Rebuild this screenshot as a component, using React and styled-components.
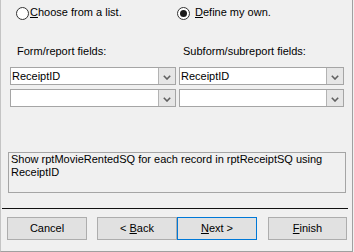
import styled, { createGlobalStyle } from 'styled-components';

const GlobalStyle = createGlobalStyle`
    body {
        margin: 0;
        background: #f0f0f0;
        font-family: "Liberation Sans", Arial, sans-serif;
        font-size: 11px;
        color: #000;
    }
`;

function Chevron() {
    return (
        <svg width="8" height="5" viewBox="0 0 8 5">
            <path d="M0.8 0.8 L4 4 L7.2 0.8" fill="none" stroke="#606060" strokeWidth="1.6" />
        </svg>
    );
}

function Combo({value}) {
    return (
        <ComboBox>
            <ComboText>{value}</ComboText>
            <DropButton><Chevron /></DropButton>
        </ComboBox>
    );
}

function App() {
    return (
        <Frame>
            <GlobalStyle />
            <RadioRow>
                <RadioItem $gap={1}>
                    <RadioCircle />
                    <span><u>C</u>hoose from a list.</span>
                </RadioItem>
                <RadioItem $gap={5}>
                    <RadioCircle $checked />
                    <span><u>D</u>efine my own.</span>
                </RadioItem>
            </RadioRow>

            <FieldGrid>
                <FieldLabel $indent={7}>Form/report fields:</FieldLabel>
                <FieldLabel $indent={4}>Subform/subreport fields:</FieldLabel>
                <Combo value="ReceiptID" />
                <Combo value="ReceiptID" />
                <Combo value="" />
                <Combo value="" />
            </FieldGrid>

            <Summary>
                Show rptMovieRentedSQ for each record in rptReceiptSQ using ReceiptID
            </Summary>

            <Separator />

            <ButtonBar>
                <Button $before={6}>Cancel</Button>
                <Button $before={10}>&lt; <u>B</u>ack</Button>
                <Button $before={0} $default><u>N</u>ext &gt;</Button>
                <Button $before={11} $width={79}><u>F</u>inish</Button>
            </ButtonBar>
        </Frame>
    );
}

const Frame = styled.div`
    box-sizing: border-box;
    width: 353px;
    height: 252px;
    border-left: 1px solid #c4c4c4;
    border-right: 1px solid #a0a0a0;
    border-bottom: 1px solid #a0a0a0;
    display: flex;
    flex-direction: column;
    line-height: 13px;
`;

const RadioRow = styled.div`
    display: grid;
    grid-template-columns: 161px auto;
    padding-left: 15px;
    margin-top: 5px;
    align-items: center;
`;

const RadioItem = styled.label`
    display: flex;
    align-items: center;
    gap: ${p => p.$gap}px;
    u { text-decoration-thickness: 1px; }
`;

const RadioCircle = styled.span`
    box-sizing: border-box;
    width: 13px;
    height: 13px;
    border: 1px solid #333;
    border-radius: 50%;
    background: #fff;
    display: flex;
    align-items: center;
    justify-content: center;
    margin-top: 2px;
    &::after {
        content: "";
        display: ${p => (p.$checked ? 'block' : 'none')};
        width: 7px;
        height: 7px;
        border-radius: 50%;
        background: #1a1a1a;
    }
`;

const FieldGrid = styled.div`
    display: grid;
    grid-template-columns: 166px 165px;
    column-gap: 3px;
    row-gap: 4px;
    padding-left: 9px;
    margin-top: 25px;
`;

const FieldLabel = styled.div`
    padding-left: ${p => p.$indent}px;
    margin-bottom: 5px;
`;

const ComboBox = styled.div`
    box-sizing: border-box;
    height: 18px;
    display: flex;
    background: #fff;
    border: 1px solid #a5a5a5;
`;

const ComboText = styled.div`
    flex: 1;
    padding-left: 1px;
    line-height: 16px;
    white-space: nowrap;
    overflow: hidden;
`;

const DropButton = styled.div`
    width: 17px;
    display: flex;
    align-items: center;
    justify-content: center;
    padding-top: 3px;
    box-sizing: border-box;
    background: #e6e6e6;
    border-left: 1px solid #b3b3b3;
`;

const Summary = styled.div`
    box-sizing: border-box;
    width: 338px;
    height: 41px;
    margin: 45px 0 0 7px;
    padding: 0 2px;
    border: 1px solid #a5a5a5;
`;

const Separator = styled.div`
    width: 346px;
    height: 1px;
    margin: 15px 0 0 1px;
    background: #111;
`;

const ButtonBar = styled.div`
    display: flex;
    margin-top: 8px;
`;

const Button = styled.button`
    box-sizing: border-box;
    width: ${p => p.$width || 80}px;
    height: 23px;
    margin-left: ${p => p.$before}px;
    padding: 0;
    font: inherit;
    color: #000;
    background: #e1e1e1;
    border: 1px solid ${p => (p.$default ? '#0078d7' : '#adadad')};
`;

export default App;
